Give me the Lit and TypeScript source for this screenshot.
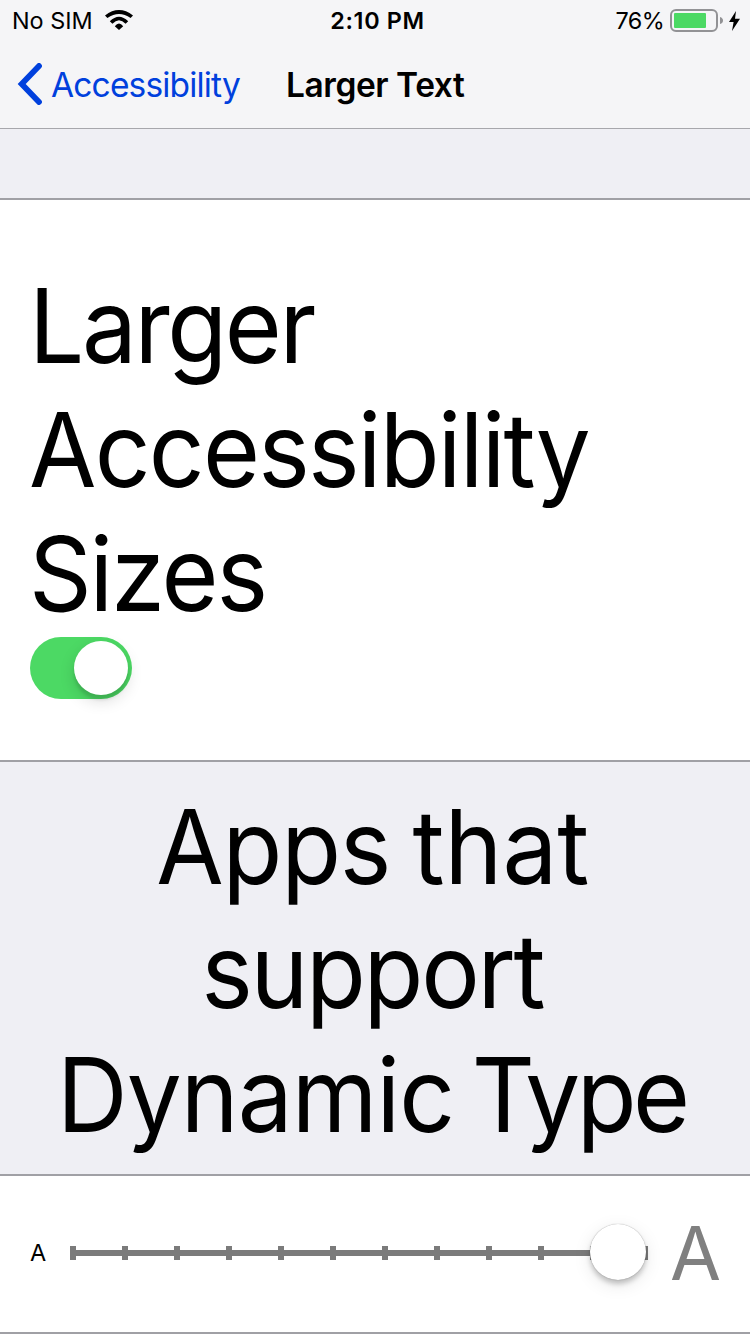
import { LitElement, html, css } from "lit";
import { customElement, property } from "lit/decorators.js";

@customElement("status-bar")
class StatusBar extends LitElement {
  static styles = css`
    :host {
      display: grid;
      grid-template-columns: 1fr auto 1fr;
      align-items: center;
      height: 40px;
      box-sizing: border-box;
      padding: 1px 10px 0 12px;
      font-size: 23.4px;
      line-height: 40px;
    }
    .side { display: flex; align-items: center; height: 40px; }
    .right { justify-content: flex-end; }
    .time { padding-left: 3px; font-weight: 600; letter-spacing: 0.65px; }
    .percent { letter-spacing: -0.6px; }
    .wifi { margin-left: 12px; margin-bottom: 2px; }
    .battery { margin-left: 6px; }
    .bolt { margin-left: 6px; }
    svg { display: block; flex: none; }
  `;

  render() {
    return html`
      <div class="side">
        <span class="carrier">No SIM</span>
        <svg class="wifi" width="28" height="20" viewBox="0 0 28 20">
          <path d="M0 5.400Q14-5.400 28 5.400L25.600 8Q14 0 2.400 8Z" />
          <path d="M4.800 11.200Q14 2.200 23.200 11.200L20.600 13.800Q14 6.800 7.400 13.800Z" />
          <path d="M9.800 16.200Q14 10.800 18.200 16.200L14 20Z" />
        </svg>
      </div>
      <span class="time">2:10 PM</span>
      <div class="side right">
        <span class="percent">76%</span>
        <svg class="battery" width="53" height="24" viewBox="0 0 53 24">
          <rect x="1" y="1" width="46" height="21" rx="5" fill="none" stroke="#929295" stroke-width="2" />
          <rect x="4" y="4" width="32" height="15" rx="1" fill="#4cd964" />
          <path d="M50 8Q53 9 53 11.500T50 15Z" fill="#929295" />
        </svg>
        <svg class="bolt" width="11" height="20" viewBox="0 0 11 20">
          <path d="M7 0L0 11H4.600L3 20L11 7.800H6Z" />
        </svg>
      </div>
    `;
  }
}

@customElement("nav-bar")
class NavBar extends LitElement {
  static styles = css`
    :host {
      display: flex;
      align-items: center;
      height: 88px;
      padding-left: 17px;
      font-size: 33.5px;
      line-height: 86px;
      white-space: nowrap;
      border-bottom: 1px solid #a7a7ac;
    }
    .back { display: flex; align-items: center; width: 269px; color: #0040dd; }
    .chevron { display: block; flex: none; margin-right: 9px; }
    .label { padding-top: 2px; letter-spacing: -0.83px; }
    .title { padding-top: 2px; font-weight: 600; letter-spacing: -0.45px; }
  `;

  render() {
    return html`
      <div class="back">
        <svg class="chevron" width="25" height="42" viewBox="0 0 25 42" fill="none"
          stroke="#0040dd" stroke-width="5.800" stroke-linecap="round" stroke-linejoin="miter">
          <path d="M22 3L4.700 21L22 39" />
        </svg>
        <span class="label">Accessibility</span>
      </div>
      <span class="title">Larger Text</span>
    `;
  }
}

@customElement("toggle-switch")
class ToggleSwitch extends LitElement {
  static styles = css`
    :host { display: block; }
    .track {
      display: flex;
      justify-content: flex-end;
      box-sizing: border-box;
      width: 102px;
      height: 62px;
      padding: 4px;
      border-radius: 31px;
      background: #4cd964;
    }
    .knob {
      width: 54px;
      height: 54px;
      border-radius: 50%;
      background: #fff;
      box-shadow: 0 6px 16px rgba(0, 0, 0, 0.14), 0 5px 3px rgba(0, 0, 0, 0.1);
    }
  `;

  render() {
    return html`<div class="track"><div class="knob"></div></div>`;
  }
}

@customElement("size-slider")
class SizeSlider extends LitElement {
  @property({ type: Number }) steps = 12;

  static styles = css`
    :host { display: block; }
    .rail {
      position: relative;
      display: flex;
      justify-content: space-between;
      width: 578px;
      height: 14px;
      background: linear-gradient(#7b7b7b, #7b7b7b) 0 4px / 100% 6px no-repeat;
    }
    .rail::after {
      content: "";
      position: absolute;
      right: 2px;
      top: -22px;
      width: 56px;
      height: 56px;
      border-radius: 50%;
      background: #fff;
      box-shadow: 0 0 1px rgba(0, 0, 0, 0.4), 0 4px 5px rgba(0, 0, 0, 0.2), 0 5px 18px rgba(0, 0, 0, 0.1);
    }
    .tick { width: 6px; height: 14px; background: #7b7b7b; }
  `;

  render() {
    return html`<div class="rail">
      ${Array.from({ length: this.steps }, () => html`<div class="tick"></div>`)}
    </div>`;
  }
}

@customElement("app-root")
class AppRoot extends LitElement {
  static styles = css`
    :host {
      display: block;
      width: 750px;
      height: 1334px;
      overflow: hidden;
      background: #efeff4;
      color: #000;
      font-family: Inter, "Liberation Sans", sans-serif;
    }
    .header { background: #f5f5f7; }
    .card {
      box-sizing: border-box;
      background: #fff;
      border-top: 2px solid #a0a0a5;
      border-bottom: 2px solid #a0a0a5;
    }
    .setting { height: 564px; margin-top: 69px; padding: 64px 30px 0; }
    .big { font-size: 102.4px; line-height: 124px; white-space: nowrap; }
    .line { display: block; width: max-content; transform: scaleX(0.955); }
    .setting .line { margin-left: -1px; transform-origin: left; }
    .l1 { letter-spacing: -2.5px; }
    .l2 { letter-spacing: -1.85px; }
    .l3 { letter-spacing: -2.25px; }
    .footer { box-sizing: border-box; height: 412px; padding-top: 23px; }
    .footer .line { margin: 0 auto; }
    .l4 { padding-right: 4px; letter-spacing: -1.3px; }
    .l4 .tail { letter-spacing: 0; word-spacing: -5.3px; }
    .l5 { padding-right: 6px; letter-spacing: -2.4px; }
    .l6 { padding-right: 7px; letter-spacing: -0.9px; }
    .l6 .tail { letter-spacing: -3.7px; word-spacing: -6.9px; }
    .switch { margin-top: 1px; }
    .scale { display: flex; align-items: center; height: 160px; padding: 0 0 2px 30px; }
    .small-a { width: 40px; font-size: 23.500px; line-height: 30px; }
    .large-a { margin-left: 22px; font-size: 74px; line-height: 80px; color: #808080; }
  `;

  render() {
    return html`
      <div class="header">
        <status-bar></status-bar>
        <nav-bar></nav-bar>
      </div>
      <section class="card setting">
        <div class="big">
          <span class="line l1">Larger</span>
          <span class="line l2">Accessibility</span>
          <span class="line l3">Sizes</span>
        </div>
        <toggle-switch class="switch"></toggle-switch>
      </section>
      <section class="big footer">
        <span class="line l4">Apps<span class="tail"> that</span></span>
        <span class="line l5">support</span>
        <span class="line l6">Dynamic<span class="tail"> Type</span></span>
      </section>
      <section class="card scale">
        <span class="small-a">A</span>
        <size-slider></size-slider>
        <span class="large-a">A</span>
      </section>
    `;
  }
}
